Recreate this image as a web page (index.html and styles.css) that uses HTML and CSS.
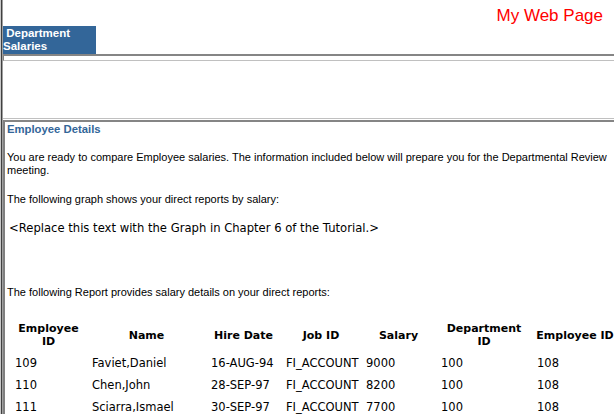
FILE: index.html
```html
<!DOCTYPE html>
<html>
<head>
<meta charset="utf-8">
<title>My Web Page</title>
<link rel="stylesheet" href="styles.css">
</head>
<body>
<div class="page">
  <header class="top">
    <div class="brand">My Web Page</div>
  </header>
  <nav class="tabbar">
    <div class="tab">&nbsp;Department Salaries</div>
  </nav>
  <div class="frame-gap"></div>
  <div class="empty-frame"></div>
  <main class="content">
    <h2 class="title">Employee Details</h2>
    <p class="text intro">You are ready to compare Employee salaries. The information included below will prepare you for the Departmental Review meeting.</p>
    <p class="text">The following graph shows your direct reports by salary:</p>
    <p class="graph">&lt;Replace this text with the Graph in Chapter 6 of the Tutorial.&gt;</p>
    <p class="text report">The following Report provides salary details on your direct reports:</p>
    <table class="report-table">
      <colgroup>
        <col class="c1"><col class="c2"><col class="c3"><col class="c4"><col class="c5"><col class="c6"><col class="c7">
      </colgroup>
      <thead>
        <tr>
          <th>Employee<br>ID</th>
          <th>Name</th>
          <th>Hire Date</th>
          <th>Job ID</th>
          <th>Salary</th>
          <th>Department<br>ID</th>
          <th class="nowrap">Employee ID</th>
        </tr>
      </thead>
      <tbody>
        <tr><td>109</td><td>Faviet,Daniel</td><td>16-AUG-94</td><td>FI_ACCOUNT</td><td>9000</td><td>100</td><td>108</td></tr>
        <tr><td>110</td><td>Chen,John</td><td>28-SEP-97</td><td>FI_ACCOUNT</td><td>8200</td><td>100</td><td>108</td></tr>
        <tr><td>111</td><td>Sciarra,Ismael</td><td>30-SEP-97</td><td>FI_ACCOUNT</td><td>7700</td><td>100</td><td>108</td></tr>
      </tbody>
    </table>
  </main>
</div>
</body>
</html>
```

FILE: styles.css
```css
html, body {
  margin: 0;
  padding: 0;
  background: #ffffff;
  overflow: hidden;
  width: 614px;
  height: 414px;
}

.page {
  height: 414px;
  box-shadow: inset 1px 0 #c8c8c8, inset 2px 0 #404040, inset 3px 0 #a0a0a0;
  font-family: "Liberation Sans", Arial, sans-serif;
  font-size: 11px;
  color: #000;
}

.top {
  height: 26px;
  display: flex;
  justify-content: flex-end;
  align-items: flex-start;
}

.brand {
  color: #ff0000;
  font-family: "Liberation Sans", Arial, sans-serif;
  font-size: 17px;
  line-height: 19px;
  padding-top: 6px;
  padding-right: 11px;
}

.tabbar {
  margin-left: 3px;
  height: 28px;
  border-bottom: 2px solid #858585;
  display: flex;
}

.tab {
  width: 93px;
  height: 28px;
  background: #336699;
  color: #ffffff;
  font-weight: bold;
  font-size: 11.5px;
  line-height: 13px;
  padding-top: 1px;
  box-sizing: border-box;
}

.frame-gap {
  margin-left: 3px;
  height: 4px;
  border-left: 1px solid #808080;
  border-bottom: 1px solid #c0c0c0;
}

.empty-frame {
  margin-left: 3px;
  height: 57px;
  border-bottom: 1px solid #c0c0c0;
}

.content {
  margin-left: 3px;
  margin-top: 1px;
  border-top: 2px solid #858585;
  border-left: 2px solid #808080;
  height: 300px;
  padding-left: 2px;
  padding-top: 1px;
}

.title {
  margin: 0;
  color: #336699;
  font-size: 11.3px;
  line-height: 13px;
  font-weight: bold;
}

.text {
  margin: 0;
  line-height: 13px;
  max-width: 606px;
}

.intro {
  margin-top: 15px;
}

.intro + .text {
  margin-top: 16px;
}

.graph {
  margin: 14px 0 0 2px;
  font-family: "DejaVu Sans", sans-serif;
  font-size: 11.6px;
  line-height: 16px;
}

.report {
  margin-top: 50px;
}

.report-table {
  margin-top: 19px;
  margin-left: 3px;
  border-collapse: collapse;
  table-layout: fixed;
  width: 608px;
  font-family: "DejaVu Sans", sans-serif;
  font-size: 11.5px;
}

.c1 { width: 77px; }
.c2 { width: 119px; }
.c3 { width: 75px; }
.c4 { width: 80px; }
.c5 { width: 75px; }
.c6 { width: 96px; }
.c7 { width: 86px; }

.report-table th {
  font-weight: bold;
  font-size: 11px;
  text-align: center;
  vertical-align: middle;
  line-height: 13px;
  padding: 3px 2px 3px 2px;
  height: 28px;
}

.report-table th.nowrap {
  white-space: nowrap;
}

.report-table td {
  text-align: left;
  padding: 0 0 0 5px;
  height: 22px;
  white-space: nowrap;
  vertical-align: middle;
}
```
